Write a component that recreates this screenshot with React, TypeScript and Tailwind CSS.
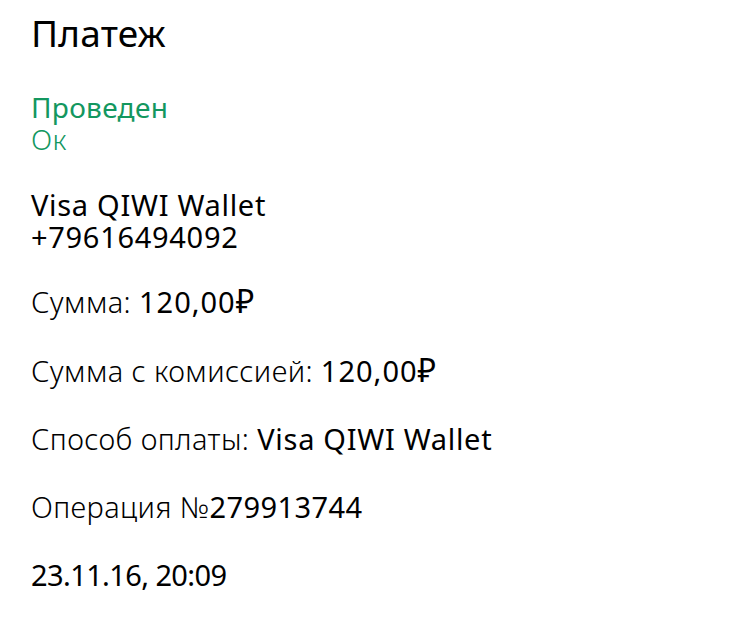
import React from "react";

export default function App() {
  const font = { fontFamily: '"Noto Sans", "Open Sans", sans-serif' };
  return (
    <div className="min-h-[623px] w-[750px] bg-white text-black" style={font}>
      <div className="flex flex-col px-[31px] pt-[11px]">
        <h1 className="text-[37px] leading-[44px] font-normal tracking-[0.2px]">Платеж</h1>
        <div className="mt-[36px] flex flex-col text-[28px] leading-[32px] tracking-[0.3px] text-[#13975f]">
          <span className="font-normal">Проведен</span>
          <span className="font-light">Ок</span>
        </div>
        <div className="mt-[34px] flex flex-col text-[29px] leading-[32px] font-normal tracking-[0.7px]">
          <span>Visa QIWI Wallet</span>
          <span>+79616494092</span>
        </div>
        <div className="mt-[32px] flex flex-col gap-[36px] text-[29px] leading-[32px] tracking-[0.4px]">
          <div>
            <span className="font-light">Сумма: </span>
            <span className="font-normal tracking-[1px]">120,00<span className="text-[32px]">₽</span></span>
          </div>
          <div>
            <span className="font-light">Сумма с комиссией: </span>
            <span className="font-normal tracking-[1px]">120,00<span className="text-[32px]">₽</span></span>
          </div>
          <div>
            <span className="font-light">Способ оплаты: </span>
            <span className="font-normal tracking-[0.7px]">Visa QIWI Wallet</span>
          </div>
          <div>
            <span className="font-light">Операция №</span>
            <span className="font-normal">279913744</span>
          </div>
          <div className="font-normal tracking-[-0.6px]">23.11.16, 20:09</div>
        </div>
      </div>
    </div>
  );
}
